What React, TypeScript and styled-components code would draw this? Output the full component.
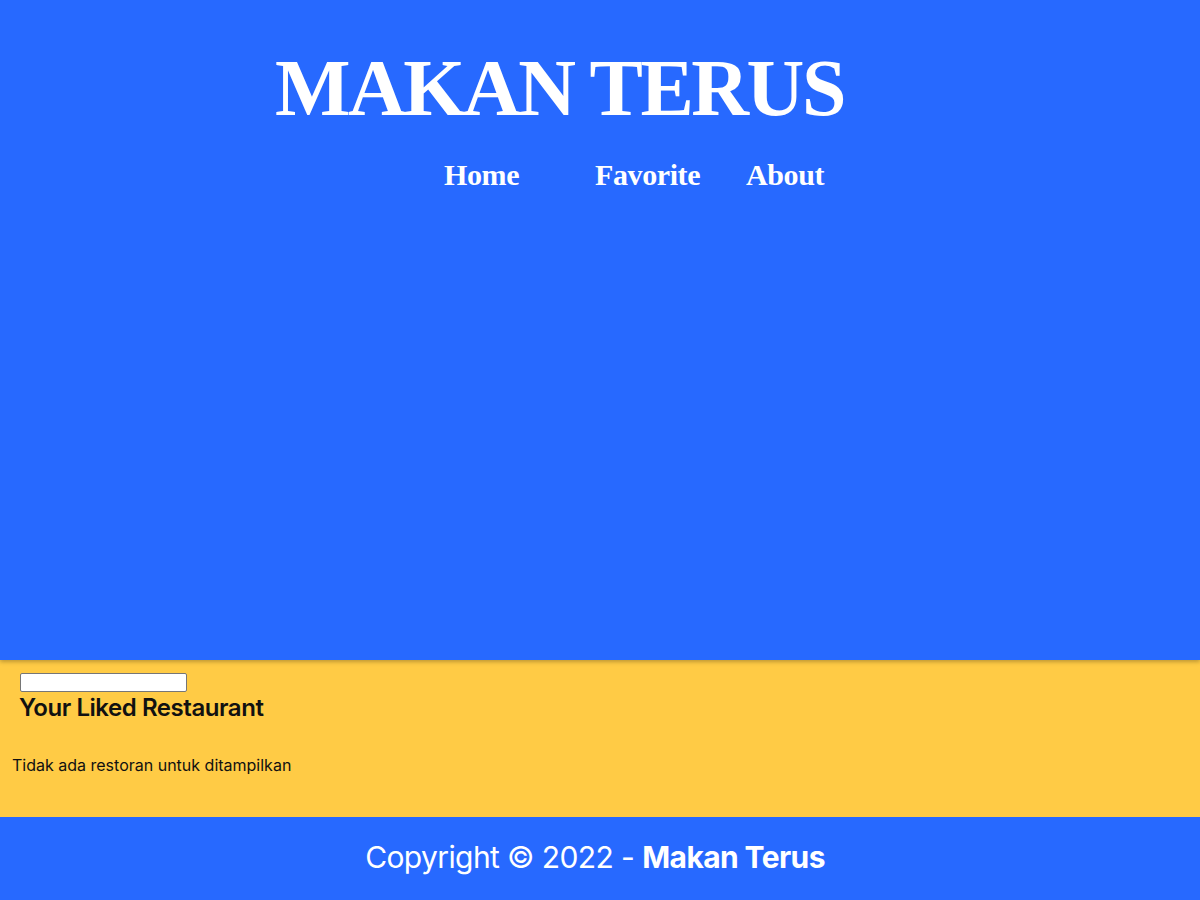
import React from "react";
import styled, { createGlobalStyle } from "styled-components";

const Global = createGlobalStyle`
  html, body { margin: 0; padding: 0; }
  body { background: #ffcb45; font-family: Inter, "Noto Sans", sans-serif; }
  * { box-sizing: border-box; }
`;

const Header = styled.header`
  background: #2769ff;
  height: 660px;
  padding-top: 46px;
  position: relative;
  z-index: 1;
  box-shadow: 0 2px 4px rgba(0, 0, 0, 0.25);
`;

const Title = styled.h1`
  margin: 0 0 0 275px;
  font-family: "Liberation Serif", serif;
  font-weight: 700;
  font-size: 80px;
  line-height: 84px;
  letter-spacing: -2.5px;
  color: #fff;
`;

const Nav = styled.nav`
  display: grid;
  grid-template-columns: repeat(3, 151px);
  margin: 27px 0 0 444px;
`;

const NavLink = styled.a`
  font-family: "Liberation Serif", serif;
  font-weight: 700;
  font-size: 30px;
  line-height: 36px;
  letter-spacing: -0.4px;
  color: #fff;
  text-decoration: none;
`;

const Main = styled.main`
  background: #ffcb45;
  height: 157px;
  padding: 13px 12px 0;
`;

const HeadSection = styled.section`
  padding-left: 8px;
  display: flex;
  flex-direction: column;
  align-items: flex-start;
`;

const Search = styled.input`
  width: 167px;
  height: 19px;
  border: 1px solid #767676;
  border-radius: 2px;
  background: #fff;
  padding: 0 2px;
  margin: 0;
`;

const Heading = styled.h2`
  margin: 2px 0 0 -1px;
  font-family: Inter, sans-serif;
  font-weight: 600;
  font-size: 24px;
  line-height: 28px;
  letter-spacing: -0.45px;
  color: #111;
`;

const Empty = styled.p`
  margin: 33px 0 0;
  font-family: Inter, sans-serif;
  font-size: 16px;
  line-height: 20px;
  letter-spacing: 0;
  color: #111;
`;

const Footer = styled.footer`
  background: #2769ff;
  height: 83px;
  display: flex;
  align-items: center;
  justify-content: center;
  color: #fff;
  font-family: Inter, sans-serif;
  font-size: 30px;
  letter-spacing: -0.6px;
  padding: 0 10px 4px 0;
`;

const Strong = styled.b`
  font-weight: 700;
  margin-left: 8px;
`;

export default function App() {
  return (
    <>
      <Global />
      <Header>
        <Title>MAKAN TERUS</Title>
        <Nav>
          <NavLink href="#">Home</NavLink>
          <NavLink href="#">Favorite</NavLink>
          <NavLink href="#">About</NavLink>
        </Nav>
      </Header>
      <Main>
        <HeadSection>
          <Search type="text" />
          <Heading>Your Liked Restaurant</Heading>
        </HeadSection>
        <Empty>Tidak ada restoran untuk ditampilkan</Empty>
      </Main>
      <Footer>
        Copyright © 2022 -<Strong>Makan Terus</Strong>
      </Footer>
    </>
  );
}
